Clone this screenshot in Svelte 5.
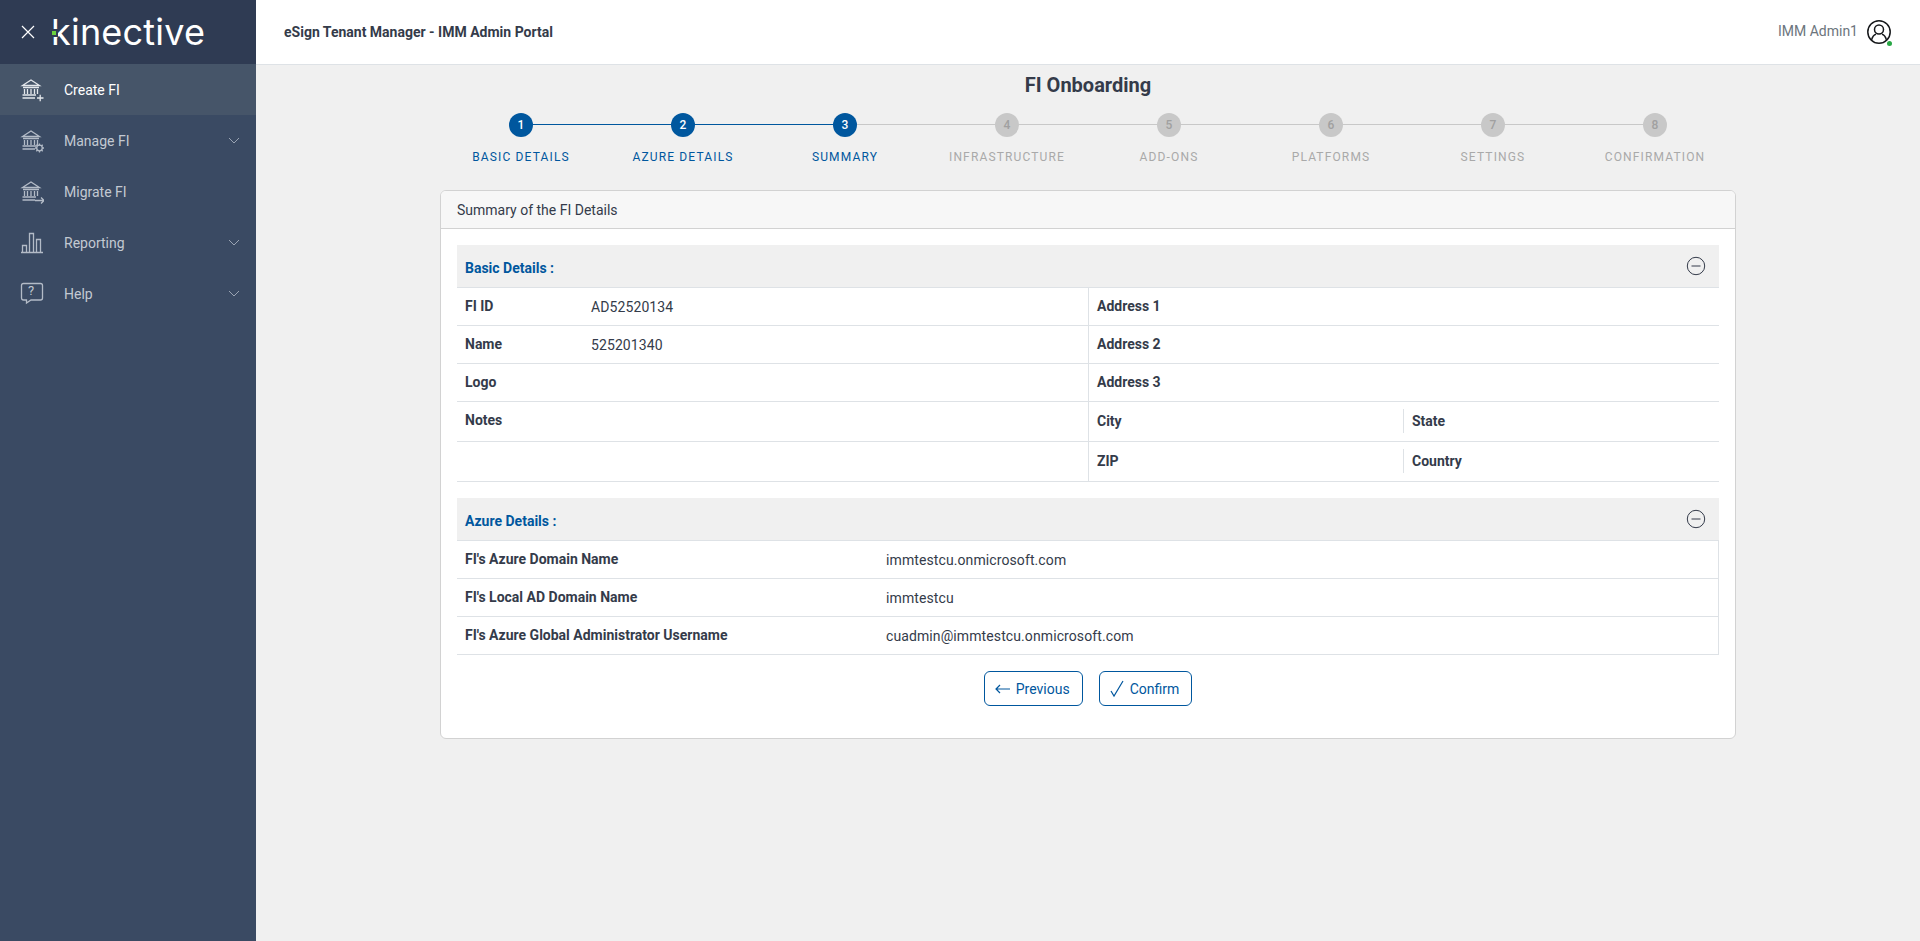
<script>
  const nav = [
    { label: 'Create FI', icon: 'plus', active: true },
    { label: 'Manage FI', icon: 'gear', chevron: true },
    { label: 'Migrate FI', icon: 'arrow' },
    { label: 'Reporting', icon: 'chart', chevron: true },
    { label: 'Help', icon: 'help', chevron: true }
  ];
  const steps = ['BASIC DETAILS', 'AZURE DETAILS', 'SUMMARY', 'INFRASTRUCTURE', 'ADD-ONS', 'PLATFORMS', 'SETTINGS', 'CONFIRMATION'];
  const azure = [
    ["FI's Azure Domain Name", 'immtestcu.onmicrosoft.com'],
    ["FI's Local AD Domain Name", 'immtestcu'],
    ["FI's Azure Global Administrator Username", 'cuadmin@immtestcu.onmicrosoft.com']
  ];
</script>

<div class="page">
  <aside class="sidebar">
    <div class="brand">
      <svg class="close" viewBox="0 0 14 14" width="14" height="14"><path d="M1 1 13 13M13 1 1 13" /></svg>
      <div class="logo"><span class="logo-text">kinective</span><i class="dot"></i></div>
    </div>
    <nav>
      {#each nav as item}
        <div class="nav-item" class:active={item.active}>
          <svg class="nav-icon" viewBox="0 0 24 24" width="24" height="24">
            {#if item.icon === 'chart'}
              <path d="M1 21.500H23M2.500 21V14.500H6.500V21M9.500 21V2.500H13.500V21M16.500 21V8.500H20.500V21" />
            {:else if item.icon === 'help'}
              <path d="M3.500 1.500H20.500Q22.500 1.500 22.500 3.500V16Q22.500 18 20.500 18H11L6.500 21V18H3.500Q1.500 18 1.500 16V3.500Q1.500 1.500 3.500 1.500Z" />
            {:else}
              <path d="M2.500 7.500 11 2 19.500 7.500ZM3 9.500H19M4.500 11V16M7.500 11V16M14.500 11V16M17.500 11V16M11 11V16M2.500 17H16M2.500 20H15" />
              {#if item.icon === 'plus'}
                <path d="M17 20H23.500M20.200 16.800V23.200" />
              {:else if item.icon === 'gear'}
                <circle cx="19.500" cy="19" r="2.800" />
                <path d="M19.500 14.500V16.200M19.500 21.800V23.500M15 19H16.700M22.300 19H24M16.300 15.800 17.500 17M21.500 21 22.700 22.200M22.700 15.800 21.500 17M17.500 21 16.300 22.200" />
              {:else}
                <path d="M15 20.500H24M21 17.500 24 20.500 21 23.500" />
              {/if}
            {/if}
          </svg>
          {#if item.icon === 'help'}<span class="qmark">?</span>{/if}
          <span class="nav-label">{item.label}</span>
          {#if item.chevron}
            <svg class="chev" viewBox="0 0 12 7" width="12" height="7"><path d="M1 1 6 6 11 1" /></svg>
          {/if}
        </div>
      {/each}
    </nav>
  </aside>

  <div class="main">
    <header class="topbar">
      <div class="app-title">eSign Tenant Manager - IMM Admin Portal</div>
      <div class="user">
        <span class="uname">IMM Admin1</span>
        <span class="avatar">
          <svg viewBox="0 0 24 24" width="24" height="24"><circle cx="12" cy="12" r="11.200" /><circle cx="12" cy="9.500" r="4.500" /><path d="M4.500 20Q6 14.800 9 14.200M19.500 20Q18 14.800 15 14.200" /></svg>
          <i></i>
        </span>
      </div>
    </header>

    <main class="content">
      <h1>FI Onboarding</h1>
      <ol class="stepper">
        {#each steps as s, i}
          <li class="step" class:done={i < 3} class:line-done={i < 2}>
            <span class="num">{i + 1}</span>
            <span class="step-label">{s}</span>
          </li>
        {/each}
      </ol>

      <section class="card">
        <div class="card-head">Summary of the FI Details</div>
        <div class="card-body">
          <div class="sec-head">
            <strong>Basic Details :</strong>
            <svg class="minus" viewBox="0 0 20 20" width="20" height="20"><circle cx="10" cy="10" r="8.700" /><path d="M5.500 10H14.500" /></svg>
          </div>
          <div class="basic">
            <div class="col left">
              <div class="row"><b class="k">FI ID</b><span>AD52520134</span></div>
              <div class="row"><b class="k">Name</b><span>525201340</span></div>
              <div class="row"><b class="k">Logo</b></div>
              <div class="row tall notes"><b class="k">Notes</b></div>
              <div class="row tall"></div>
            </div>
            <div class="col right">
              <div class="row"><b>Address 1</b></div>
              <div class="row"><b>Address 2</b></div>
              <div class="row"><b>Address 3</b></div>
              <div class="row tall split"><b>City</b><b class="second">State</b></div>
              <div class="row tall split"><b>ZIP</b><b class="second">Country</b></div>
            </div>
          </div>

          <div class="sec-head azure-head">
            <strong>Azure Details :</strong>
            <svg class="minus" viewBox="0 0 20 20" width="20" height="20"><circle cx="10" cy="10" r="8.700" /><path d="M5.500 10H14.500" /></svg>
          </div>
          <div class="azure">
            {#each azure as [k, v]}
              <div class="row"><b class="k-wide">{k}</b><span>{v}</span></div>
            {/each}
          </div>

          <div class="actions">
            <button type="button">
              <svg viewBox="0 0 16 10" width="16" height="10"><path d="M15 5H1M5 1 1 5 5 9" /></svg>
              Previous
            </button>
            <button type="button" class="confirm">
              <svg viewBox="0 0 14 18" width="14" height="18"><path d="M1 11 4 16 13 1" /></svg>
              Confirm
            </button>
          </div>
        </div>
      </section>
    </main>
  </div>
</div>

<style>
  :global(body) { margin: 0; background: #f0f0f0; font-family: Roboto, "Liberation Sans", sans-serif; color: #343b4a; }
  .page { display: flex; min-height: 941px; }

  .sidebar { width: 256px; flex: none; background: #3a4a63; }
  .brand { height: 64px; background: #2f3b53; display: flex; align-items: center; padding-left: 21px; gap: 16px; box-sizing: border-box; }
  .close { fill: none; stroke: #fff; stroke-width: 1.2; flex: none; }
  .logo { position: relative; height: 64px; display: flex; align-items: center; }
  .logo-text { font-family: Inter, sans-serif; font-weight: 400; font-size: 36px; letter-spacing: 0.2px; color: #fff; line-height: 1; }
  .dot { position: absolute; left: 1px; top: 31px; width: 4px; height: 4px; background: #6cd13f; box-shadow: 0 0 0 2px #2f3b53; }

  .nav-item { height: 51px; display: flex; align-items: center; padding-left: 20px; position: relative; color: #c3c9d2; font-size: 14px; }
  .nav-item.active { background: #465569; color: #fff; }
  .nav-icon { fill: none; stroke: #b3bbc7; stroke-width: 1.3; flex: none; }
  .active .nav-icon { stroke: #e4e7eb; }
  .qmark { position: absolute; left: 28px; top: 15px; font-size: 13px; color: #c3c9d2; }
  .nav-label { margin-left: 20px; }
  .chev { position: absolute; right: 16px; top: 22px; fill: none; stroke: #9aa4b3; stroke-width: 1; }

  .main { flex: 1; min-width: 0; }
  .topbar { height: 65px; box-sizing: border-box; background: #fff; border-bottom: 1px solid #dee2e6; display: flex; align-items: center; justify-content: space-between; padding: 0 29px 0 28px; }
  .app-title { font-size: 14px; font-weight: 700; color: #343b4a; }
  .user { display: flex; align-items: center; gap: 9px; font-size: 14px; color: #6c757d; }
  .uname { padding-bottom: 2px; }
  .avatar { position: relative; display: block; width: 24px; height: 24px; }
  .avatar svg { display: block; fill: none; stroke: #16181b; stroke-width: 1.5; }
  .avatar i { position: absolute; right: -1px; bottom: -2px; width: 5px; height: 5px; border-radius: 50%; background: #28a745; }

  .content { width: 1296px; margin-left: 184px; }
  h1 { margin: 0; padding-top: 8px; height: 35px; box-sizing: border-box; line-height: 24px; font-size: 20px; font-weight: 700; text-align: center; color: #343b4a; }
  .stepper { list-style: none; margin: 0; padding: 0; display: grid; grid-template-columns: repeat(8, 1fr); height: 90px; }
  .step { position: relative; display: flex; flex-direction: column; align-items: center; color: #a9a9a9; }
  .step::after { content: ''; position: absolute; left: 50%; width: 100%; top: 24px; height: 1px; background: #c8c8c8; }
  .step:last-child::after { display: none; }
  .line-done::after { background: #00579e; }
  .num { position: relative; z-index: 1; margin-top: 13px; width: 24px; height: 24px; border-radius: 50%; background: #c8c8c8; color: #a0a0a0; font-size: 12px; font-weight: 500; display: flex; align-items: center; justify-content: center; }
  .done .num { background: #00579e; color: #fff; }
  .step-label { margin-top: 12px; font-size: 12px; letter-spacing: 1.15px; line-height: 16px; }
  .done .step-label { color: #00579e; }

  .card { background: #fff; border: 1px solid #d2d2d2; border-radius: 6px; height: 549px; box-sizing: border-box; overflow: hidden; }
  .card-head { height: 38px; box-sizing: border-box; background: #f7f7f7; border-bottom: 1px solid #d2d2d2; padding: 0 16px; display: flex; align-items: center; font-size: 14px; color: #343b4a; }
  .card-body { padding: 16px 16px 0; }
  .sec-head { height: 43px; box-sizing: border-box; background: #f0f0f0; border-bottom: 1px solid #dee2e6; display: flex; align-items: center; justify-content: space-between; padding: 0 13px 0 8px; }
  .sec-head strong { font-size: 14px; font-weight: 700; color: #00579e; padding-top: 3px; }
  .minus { fill: none; stroke: #343b4a; stroke-width: 1; margin-bottom: 1px; }
  .row { height: 38px; box-sizing: border-box; border-bottom: 1px solid #dee2e6; display: flex; align-items: center; font-size: 14px; padding-left: 8px; }
  .row b { font-weight: 700; padding-bottom: 1px; }
  .row span { letter-spacing: 0.1px; padding-top: 1px; }
  .row.tall { height: 40px; }
  .notes { align-items: flex-start; padding-top: 10px; }
  .basic { display: grid; grid-template-columns: 631px minmax(0, 1fr); }
  .right { border-left: 1px solid #dee2e6; }
  .k { width: 126px; flex: none; }
  .split b { width: 306px; flex: none; box-sizing: border-box; }
  .split .second { position: relative; padding-left: 9px; }
  .split .second::before { content: ''; position: absolute; left: 0; top: -4px; height: 24px; width: 1px; background: #dee2e6; }
  .azure-head { margin-top: 16px; }
  .azure { border-right: 1px solid #dee2e6; }
  .k-wide { width: 421px; flex: none; }
  .actions { display: flex; justify-content: center; gap: 16px; padding-top: 16px; }
  button { height: 35px; box-sizing: border-box; background: #fff; border: 1px solid #00579e; border-radius: 6px; color: #00579e; font: 14px Roboto, sans-serif; padding: 0 12px 0 10px; display: flex; align-items: center; gap: 5px; }
  .confirm { gap: 6px; }
  button svg { fill: none; stroke: #00579e; stroke-width: 1.2; }
</style>
